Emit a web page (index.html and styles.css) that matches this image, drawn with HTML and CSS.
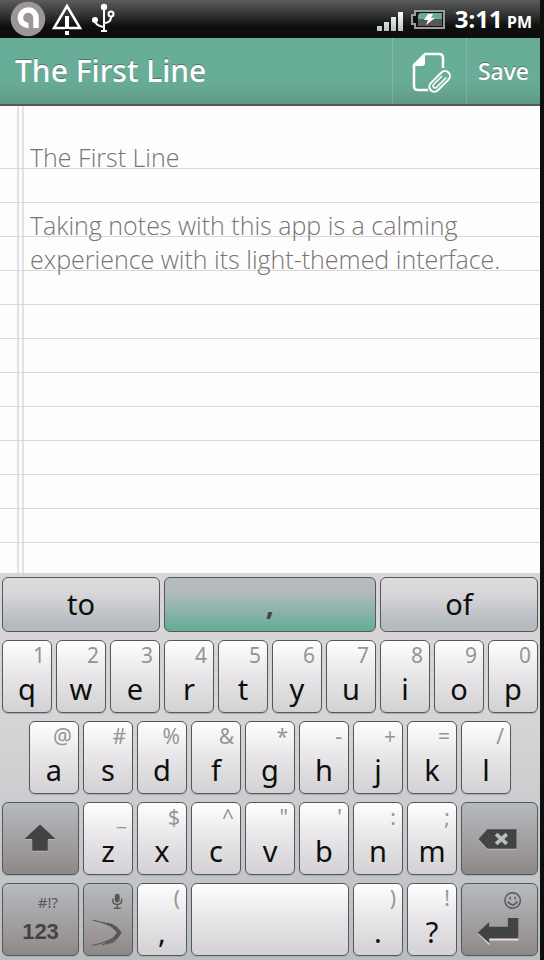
FILE: index.html
```html
<!DOCTYPE html>
<html lang="en">
<head>
<meta charset="utf-8">
<meta name="viewport" content="width=device-width, initial-scale=1">
<title>The First Line</title>
<link rel="stylesheet" href="styles.css">
</head>
<body>
<div class="status">
  <svg width="120" height="38" viewBox="0 0 120 38" aria-hidden="true">
    <circle cx="28" cy="19" r="17.300" fill="#9c9696"/>
    <path d="M28.500 25.500A7.800 7.800 0 1 1 36 18V28" fill="none" stroke="#fff" stroke-width="5.500"/>
    <path d="M65 28H54L67 6 80 28H69" fill="none" stroke="#fff" stroke-width="2.500"/>
    <path d="M67 16V29M67 31V35" stroke="#fff" stroke-width="4"/>
    <g fill="none" stroke="#fff" stroke-width="2">
      <path d="M104 6V31M101 31H107M95 20Q95 26 104 27M104 23Q111 23 111 17"/>
      <circle cx="111" cy="14" r="2.500"/>
    </g>
    <circle cx="104" cy="7" r="3.200" fill="#fff"/>
    <circle cx="95" cy="20" r="3" fill="#fff"/>
  </svg>
  <div class="status-right">
    <svg width="70" height="38" viewBox="0 0 70 38" aria-hidden="true">
      <defs><linearGradient id="bars" x2="0" y2="1"><stop stop-color="#fff"/><stop offset="1" stop-color="#b9bec2"/></linearGradient></defs>
      <path d="M2 26h5v5H2zM9 22h5v9H9zM16 17h5v14h-5zM23 12h5v19h-5z" fill="url(#bars)"/>
      <path d="M40 11H69V28H40V24H37V15H40Z" fill="#111" stroke="#a09a9a" stroke-width="2"/>
      <path d="M45 13H67V19H43V15Z" fill="#68ad97"/>
      <path d="M43 19H67V26H43Z" fill="#555857"/>
      <path d="M53 14H58L56 18H60L51 25 53 20H49Z" fill="#fff"/>
    </svg>
    <span class="clock">3:11 <small>PM</small></span>
  </div>
</div>
<header class="bar">
  <h1>The First Line</h1>
  <button class="action" aria-label="Attach">
    <svg width="44" height="46" viewBox="0 0 44 46" aria-hidden="true">
      <path d="M20 42H10Q6 42 6 38V17L17 6H31Q35 6 35 10V20" fill="none" stroke="#fff" stroke-width="2.500"/>
      <path d="M6 18L17 6V15Q17 18 14 18Z" fill="#fff"/>
      <g transform="translate(32 33) rotate(45)" fill="none" stroke="#fff" stroke-width="2">
        <path d="M5 -7A5 5 0 0 0 -5 -7V8A5 5 0 0 0 5 8Z"/>
        <path d="M-2 -5V7A2 2 0 0 0 2 7V-7" stroke-width="1.500"/>
      </g>
    </svg>
  </button>
  <button class="action save">Save</button>
</header>
<main class="paper">
  <textarea class="note" aria-label="Note" spellcheck="false">The First Line

Taking notes with this app is a calming experience with its light-themed interface.</textarea>
</main>
<section class="keyboard" aria-label="Keyboard">
  <button class="word">to</button>
  <button class="word picked">,</button>
  <button class="word">of</button>

  <button class="key"><small>1</small><b>q</b></button>
  <button class="key"><small>2</small><b>w</b></button>
  <button class="key"><small>3</small><b>e</b></button>
  <button class="key"><small>4</small><b>r</b></button>
  <button class="key"><small>5</small><b>t</b></button>
  <button class="key"><small>6</small><b>y</b></button>
  <button class="key"><small>7</small><b>u</b></button>
  <button class="key"><small>8</small><b>i</b></button>
  <button class="key"><small>9</small><b>o</b></button>
  <button class="key"><small>0</small><b>p</b></button>

  <button class="key indent"><small>@</small><b>a</b></button>
  <button class="key"><small>#</small><b>s</b></button>
  <button class="key"><small>%</small><b>d</b></button>
  <button class="key"><small>&amp;</small><b>f</b></button>
  <button class="key"><small>*</small><b>g</b></button>
  <button class="key"><small>-</small><b>h</b></button>
  <button class="key"><small>+</small><b>j</b></button>
  <button class="key"><small>=</small><b>k</b></button>
  <button class="key"><small>/</small><b>l</b></button>

  <button class="key dark wide" aria-label="Shift">
    <svg width="77" height="73" viewBox="0 0 77 73"><path d="M38 23L54 38H46V50H30V38H22Z" fill="#bbb8b8"/><path d="M38 22L54 37H46V49H30V37H22Z" fill="#424444"/></svg>
  </button>
  <button class="key"><small>_</small><b>z</b></button>
  <button class="key"><small>$</small><b>x</b></button>
  <button class="key"><small>^</small><b>c</b></button>
  <button class="key"><small>"</small><b>v</b></button>
  <button class="key"><small>'</small><b>b</b></button>
  <button class="key"><small>:</small><b>n</b></button>
  <button class="key"><small>;</small><b>m</b></button>
  <button class="key dark wide" aria-label="Backspace">
    <svg width="77" height="73" viewBox="0 0 77 73"><path d="M17 38L26 28H56V48H26Z" fill="#bbb8b8"/><path d="M17 37L26 27H56V47H26Z" fill="#424444"/><path d="M35 32L46 42M46 32L35 42" stroke="#b9bdc0" stroke-width="4"/></svg>
  </button>

  <button class="key dark wide mode"><small>#!?</small><strong>123</strong></button>
  <button class="key dark" aria-label="Voice and swipe">
    <svg width="50" height="73" viewBox="0 0 50 73" fill="none" stroke="#555857">
      <rect x="32" y="10" width="5" height="9" rx="2.500" fill="#555857" stroke="none"/>
      <path d="M30 15V17Q30 21 34.500 21T39 17V15M34.500 21V25M31 25H38" stroke-width="1.500"/>
      <path d="M9 37Q28 41 37 50Q28 60 9 63M19 39Q30 43 35 50Q30 58 19 63M24 40Q33 44 37 50Q33 57 24 62M28 41Q35 45 38 50Q35 57 28 61" stroke-width="1.200"/>
      <path d="M32 44L37 50 32 56" stroke-width="3"/>
    </svg>
  </button>
  <button class="key"><small>(</small><b>,</b></button>
  <button class="key space" aria-label="Space"></button>
  <button class="key"><small>)</small><b>.</b></button>
  <button class="key"><small>!</small><b>?</b></button>
  <button class="key dark wide" aria-label="Enter">
    <svg width="77" height="73" viewBox="0 0 77 73">
      <g fill="none" stroke="#555857" stroke-width="1.500"><circle cx="52" cy="17" r="8"/><path d="M47 18Q52 25 57 18M49.500 13V16M54.500 13V16"/></g>
      <path d="M16 51L28 40V45H47V36H58V58H28V63Z" fill="#e5e2e2"/><path d="M16 50L28 39V44H47V35H58V56H28V61Z" fill="#424444"/>
    </svg>
  </button>
</section>
</body>
</html>
```
FILE: styles.css
```css
* { box-sizing: border-box; }

body {
  margin: 0;
  min-height: 100vh;
  display: flex;
  flex-direction: column;
  border-right: 4px solid #0d0f0d;
  background: #fdfdfd;
  font-family: "Noto Sans", "Open Sans", sans-serif;
}

button { margin: 0; padding: 0; font-family: inherit; }
svg { display: block; }

.status {
  height: 38px;
  display: flex;
  justify-content: space-between;
  background: linear-gradient(#5a5c5b, #3c3e3d 30%, #0d0f0d 70%);
  color: #fff;
}
.status-right { display: flex; padding-right: 8px; gap: 10px; }
.clock { font-size: 24px; line-height: 38px; font-weight: 700; white-space: nowrap; }
.clock small { font-size: 16px; margin-left: -2px; }

.bar {
  height: 68px;
  display: flex;
  border-bottom: 2px solid #555857;
  background: linear-gradient(#68ad97 65%, #5f9a88);
  color: #fff;
}
.bar h1 {
  flex: 1;
  margin: 0;
  padding-left: 15px;
  font-size: 30px;
  font-weight: 500;
  line-height: 66px;
  text-shadow: 0 -1px #55706a;
}
.action {
  width: 74px;
  display: flex;
  align-items: center;
  justify-content: center;
  border: 0;
  border-left: 1px dotted #9cbcb1;
  background: none;
  color: #fff;
}
.save { font-size: 23px; font-weight: 500; text-shadow: 0 -1px #55706a; }

.paper {
  flex: 1;
  display: flex;
  padding-top: 29px;
  background: linear-gradient(90deg, transparent 17px, #e2e2e2 17px 19px, transparent 19px 22px, #e2e2e2 22px 24px, transparent 24px);
}
.note {
  flex: 1;
  min-width: 0;
  padding: 5px 10px 0 30px;
  border: 0;
  outline: 0;
  resize: none;
  overflow: hidden;
  background: repeating-linear-gradient(transparent 0 33px, #d8d8d8 33px 34px);
  color: #787474;
  font-family: "Open Sans", "Noto Sans", sans-serif;
  font-size: 25px;
  font-weight: 300;
  line-height: 34px;
}

.keyboard {
  display: grid;
  grid-template-columns: repeat(20, minmax(0, 1fr));
  grid-template-rows: 55px repeat(4, 73px);
  gap: 8px 4px;
  padding: 4px 2px;
  background: linear-gradient(#d7d5d8 35%, #b9bec2);
}
.word, .key {
  border: 1px solid #555857;
  border-radius: 6px;
  color: #0d0f0d;
}
.word {
  grid-column: span 6;
  background: linear-gradient(#dddbde, #d5d4d7 35%, #b5bbbf 85%);
  font-size: 29px;
  line-height: 50px;
  padding-bottom: 2px;
}
.word.picked {
  grid-column: span 8;
  background: linear-gradient(#b5bbbf 25%, #68ad97 95%);
  color: #444746;
  font-weight: 700;
}
.key {
  grid-column: span 2;
  display: flex;
  flex-direction: column;
  overflow: hidden;
  background: linear-gradient(#fff, #e9e7ea 45%, #d3d1d4);
  box-shadow: 0 1px 1px #a8adb0;
}
.key small {
  padding-right: 6px;
  color: #999494;
  font-size: 21px;
  line-height: 28px;
  text-align: right;
}
.key b {
  font-size: 29px;
  font-weight: 400;
  line-height: 40px;
  text-align: center;
}
.key small, .key b { width: 100%; }
.key.indent { grid-column: 2 / span 2; }
.key.wide { grid-column: span 3; }
.key.space { grid-column: span 6; }
.key.dark {
  align-items: center;
  justify-content: center;
  background: linear-gradient(#b5bbbf, #9b9595 75%, #8d8888);
}
.key.mode small {
  padding: 0 20px 0 0;
  color: #555857;
  font-size: 15px;
  line-height: 24px;
}
.key.mode strong {
  color: #424444;
  font-family: "Liberation Sans", sans-serif;
  font-size: 22px;
  line-height: 36px;
}
```
